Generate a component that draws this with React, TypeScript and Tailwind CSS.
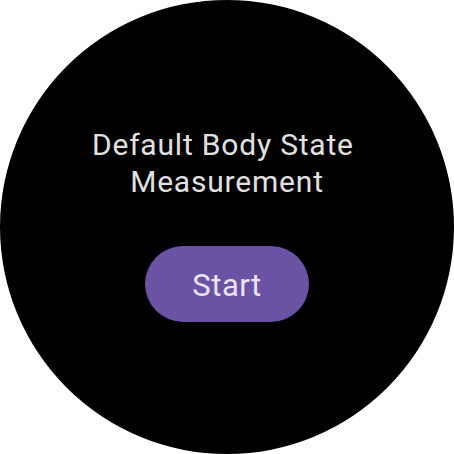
import React from "react";

export default function App() {
  return (
    <div className="w-[454px] h-[454px] bg-white">
      <div
        className="w-[454px] h-[454px] rounded-full bg-black flex flex-col items-center"
        style={{ fontFamily: "Roboto, 'Noto Sans', sans-serif" }}
      >
        <div className="mt-[127px] text-center text-[30px] leading-[36.5px] tracking-[0.8px] text-[#e1e1e1]">
          Default Body State{"\u00a0"}
          <br />
          Measurement
        </div>
        <button className="mt-[46px] w-[164px] h-[76px] rounded-full bg-[#6a52a4] text-[#ebe2f7] text-[31px] tracking-[0.5px] flex items-center justify-center pt-[5px]">
          Start
        </button>
      </div>
    </div>
  );
}
